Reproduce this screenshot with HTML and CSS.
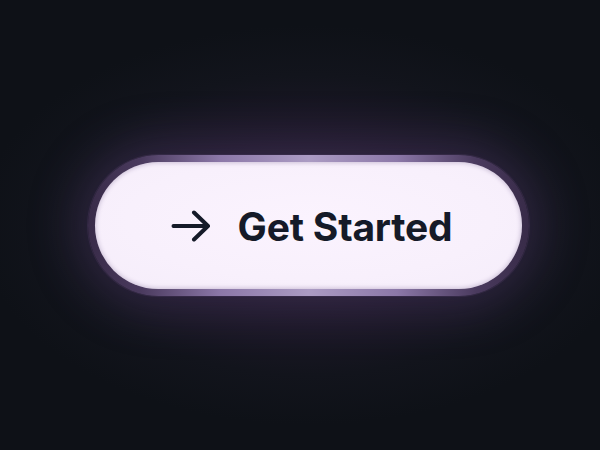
FILE: index.html
```html
<!DOCTYPE html>
<html lang="en">
<head>
  <meta charset="UTF-8">
  <meta name="viewport" content="width=device-width, initial-scale=1.0">
  <title>Get Started</title>
  <link rel="stylesheet" href="styles.css">
</head>
<body>
  <div class="stage">
    <div class="glow-ring">
      <button class="cta">
        <svg class="cta-icon" viewBox="0 0 40 32" width="40" height="32" aria-hidden="true">
          <path d="M2.5 16 H37 M23 2.5 L37 16 L23 29.5" fill="none" stroke="currentColor" stroke-width="4" stroke-linecap="round" stroke-linejoin="round"/>
        </svg>
        <span>Get Started</span>
      </button>
    </div>
  </div>
</body>
</html>
```

FILE: styles.css
```css
* {
  box-sizing: border-box;
  margin: 0;
  padding: 0;
}

body {
  font-family: Inter, "Noto Sans", sans-serif;
  height: 100vh;
  background: radial-gradient(ellipse 330px 200px at 308px 225px, #2d2439 0%, #1d1828 45%, #12141c 75%, #0e1117 100%);
  background-color: #0e1117;
}

.stage {
  height: 100%;
  display: flex;
  align-items: center;
  justify-content: center;
  padding-left: 16px;
}

/* purple rim around the pill, brighter along the middle */
.glow-ring {
  padding: 7px;
  border-radius: 999px;
  background: linear-gradient(90deg, #382b48 0%, #4a3a5e 12%, #8c78a8 30%, #ab9bc3 50%, #8c78a8 70%, #4a3a5e 88%, #382b48 100%);
  box-shadow: 0 0 0 1px rgba(60, 46, 78, 0.6), 0 0 50px 12px rgba(120, 88, 160, 0.25);
}

.cta {
  width: 427px;
  height: 127px;
  border: none;
  border-radius: 999px;
  background: radial-gradient(ellipse at 50% 45%, #fbf3fe 0%, #f8f0fc 60%, #f5edfa 100%);
  box-shadow: inset 0 0 4px 1px rgba(90, 70, 120, 0.28);
  color: #151a28;
  display: flex;
  align-items: center;
  justify-content: center;
  gap: 27px;
  padding-left: 7px;
  padding-top: 2px;
  font-family: Inter, "Noto Sans", sans-serif;
  font-size: 39px;
  font-weight: 700;
  letter-spacing: -0.2px;
  cursor: pointer;
}

.cta-icon {
  width: 40px;
  height: 32px;
  flex-shrink: 0;
}
```
